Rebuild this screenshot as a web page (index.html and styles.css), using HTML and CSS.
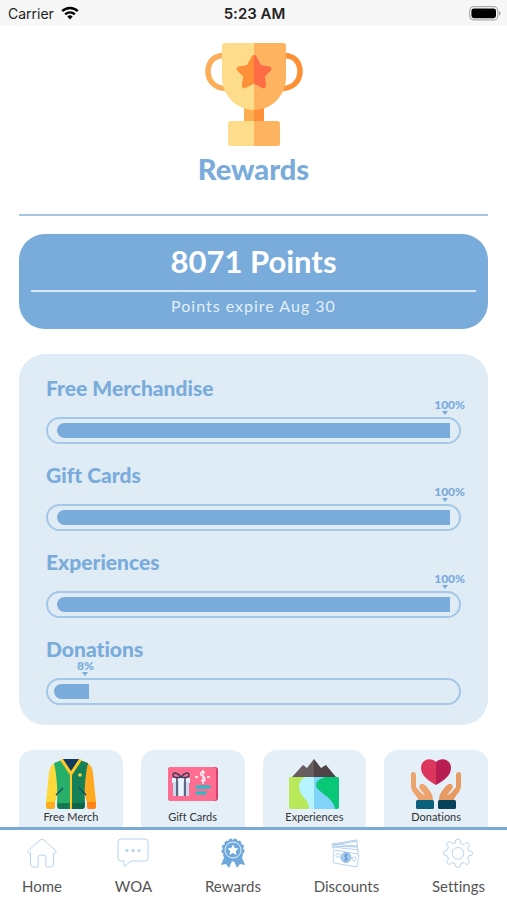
FILE: index.html
```html
<!DOCTYPE html>
<html lang="en">

<head>
    <meta charset="UTF-8">
    <meta name="viewport" content="width=device-width, initial-scale=1.0">
    <title>Rewards</title>
    <link rel="stylesheet" href="styles.css">
</head>

<body>

    <div class="status">
        <div class="carrier">
            <span>Carrier</span>
            <svg width="18" height="14" viewBox="0 0 18 14" fill="none" stroke="#000" stroke-width="2.4">
                <path d="M1.2 5.2a11.2 11.2 0 0 1 15.6 0" />
                <path d="M4.2 8.3a7 7 0 0 1 9.6 0" />
                <path d="M9 13.4 6.3 10.6a4 4 0 0 1 5.4 0z" fill="#000" stroke="none" />
            </svg>
        </div>
        <div class="time">5:23 AM</div>
        <div class="battery">
            <svg width="32" height="15" viewBox="0 0 32 15">
                <rect x="0.7" y="0.7" width="28" height="13.2" rx="4" fill="#fff" stroke="#aaa" stroke-width="1.2" />
                <rect x="2.4" y="2.4" width="24.6" height="9.8" rx="2.4" fill="#000" />
                <path d="M30 5.2c2 .6 2 3.6 0 4.2z" fill="#999" />
            </svg>
        </div>
    </div>

    <main>
        <header class="heading">
            <svg class="trophy" width="98" height="103" viewBox="0 0 98 103">
                <path d="M20 12.500C8 12 3 20 3 28.500S9 45 20 45.500" fill="none" stroke="#fdad58" stroke-width="5.500" />
                <path d="M78 12.500c12-.5 17 7.500 17 16s-6 16.500-17 17" fill="none" stroke="#fe9034" stroke-width="5.500" />
                <path d="M39 62h10v20H39z" fill="#fdac50" />
                <path d="M49 62h10v20H49z" fill="#fe903a" />
                <path d="M49 0H20q-3 0-3 3v31c0 18 14 33 32 33z" fill="#fddc8b" />
                <path d="M49 0h29q3 0 3 3v31c0 18-14 33-32 33z" fill="#fdb35f" />
                <path d="M49 78H26q-3 0-3 3v20q0 2 2 2h24z" fill="#fddc8b" />
                <path d="M49 78h23q3 0 3 3v20q0 2-2 2H49z" fill="#fdb35f" />
                <path d="M49 12c-1 0-2 .6-2.600 1.700L42 22l-8.500 1.400c-2 .5-2.600 2.600-1.300 4l6 6.200-1.300 9c-.2 2 1.700 3.400 3.500 2.500l8.600-4.300z" fill="#fe903a" />
                <path d="M49 12c1 0 2 .6 2.600 1.700L56 22l8.500 1.400c2 .5 2.600 2.600 1.300 4l-6 6.200 1.300 9c.2 2-1.700 3.400-3.500 2.500L49 40.800z" fill="#fd6c46" />
            </svg>
            <h1>Rewards</h1>
        </header>

        <section class="points">
            <h2>8071 Points</h2>
            <p>Points expire Aug 30</p>
        </section>

        <section class="goals">
            <div class="goal">
                <h3 id="goalMerch">Free Merchandise</h3>
                <div class="marker full"><span>100%</span></div>
                <div class="track" role="progressbar" aria-labelledby="goalMerch" aria-valuenow="100">
                    <div class="fill" style="width: 100%"></div>
                </div>
            </div>
            <div class="goal">
                <h3 id="goalCards">Gift Cards</h3>
                <div class="marker full"><span>100%</span></div>
                <div class="track" role="progressbar" aria-labelledby="goalCards" aria-valuenow="100">
                    <div class="fill" style="width: 100%"></div>
                </div>
            </div>
            <div class="goal">
                <h3 id="goalExp">Experiences</h3>
                <div class="marker full"><span>100%</span></div>
                <div class="track" role="progressbar" aria-labelledby="goalExp" aria-valuenow="100">
                    <div class="fill" style="width: 100%"></div>
                </div>
            </div>
            <div class="goal">
                <h3 id="goalDonate">Donations</h3>
                <div class="marker low"><span>8%</span></div>
                <div class="track low" role="progressbar" aria-labelledby="goalDonate" aria-valuenow="8">
                    <div class="fill" style="width: 8%"></div>
                </div>
            </div>
        </section>

        <section class="cards">
            <a class="card" href="#merch">
                <svg width="50" height="50" viewBox="0 0 50 50">
                    <path d="M17 0h16l1 5-9 11-9-11z" fill="#153b5c" />
                    <path d="M15 2C7 4 4 6 3 14L0 43h9l7-20z" fill="#ffd93b" />
                    <path d="M35 2c8 2 11 4 12 12l3 29h-9l-7-20z" fill="#ffaa20" />
                    <path d="M0 43h9v5q0 2-2 2H2q-2 0-2-2z" fill="#ffad1f" />
                    <path d="M41 43h9v5q0 2-2 2h-5q-2 0-2-2z" fill="#ff8415" />
                    <path d="M16 1 8 4c2 9 4 23 3 40h14V15z" fill="#27ae69" />
                    <path d="m34 1 8 3c-2 9-4 23-3 40H25V15z" fill="#168057" />
                    <path d="M11 44h14v6H14q-3 0-3-3z" fill="#168057" />
                    <path d="M25 44h14v3q0 3-3 3H25z" fill="#0d6749" />
                    <path d="m17 0 8 12 8-12 3 1-10 15v34h-2V16L14 1z" fill="#ffc928" />
                    <path d="m10 36 7-7M40 36l-7-7" stroke="#155062" stroke-width="1.500" />
                    <path d="M14 45v5m3-5v5m3-5v5m10-5v5m3-5v5m3-5v5" stroke="#0c5a43" stroke-width=".7" />
                    <circle cx="34" cy="16" r="1.700" fill="#ffd93b" />
                </svg>
                <span>Free Merch</span>
            </a>
            <a class="card" href="#giftcards">
                <svg width="50" height="50" viewBox="0 0 50 50">
                    <rect x="0" y="8" width="50" height="34" rx="3" fill="#d93f73" />
                    <rect x="0" y="8" width="48" height="34" rx="3" fill="#ff6e91" />
                    <path d="M4 19h18v5H4z" fill="#e9f3ff" />
                    <path d="M5 23h16v13q0 1-1 1H6q-1 0-1-1z" fill="#c7dcf1" />
                    <path d="M11 23h4v14h-4z" fill="#edf5ff" />
                    <path d="M9 19v18M17 19v18M13 18c-4-5-8-5-8-2s5 3 8 2c4-5 8-5 8-2s-5 3-8 2z" fill="none" stroke="#3c405a" stroke-width="1.500" />
                    <path d="M37 14c-2-3-6 0-4 2l3 2c3 3-1 6-3 3m2-10v14M27 18h3M39 18h3" fill="none" stroke="#fff" stroke-width="1.300" />
                    <path d="M29 28h12M29 34h8" stroke="#32b9c6" stroke-width="3.500" stroke-linecap="round" />
                </svg>
                <span>Gift Cards</span>
            </a>
            <a class="card" href="#experiences">
                <svg width="50" height="50" viewBox="0 0 50 50">
                    <path d="M3 18 14 6l4 3 7-9v18z" fill="#685d5e" />
                    <path d="m25 0 7 9 5-3 10 12H25z" fill="#504347" />
                    <path d="M1 18h24v32H2q-2 0-2-2V19z" fill="#b9e85b" />
                    <path d="M25 18h24l1 1v29q0 2-2 2H25z" fill="#08c777" />
                    <path d="M17 18h8v32h-5c0-11-9-11-10-22 0-5 3-9 7-10z" fill="#b8f4ff" />
                    <path d="M25 18h11c-5 2-9 4-9 8 0 7 18 12 19 24H25z" fill="#80d4f7" />
                </svg>
                <span>Experiences</span>
            </a>
            <a class="card" href="#donations">
                <svg width="50" height="50" viewBox="0 0 50 50">
                    <path d="M25 3c-5-5-15-3-15 6 0 8 8 13 15 17z" fill="#dc365f" />
                    <path d="M25 3c5-5 15-3 15 6 0 8-8 13-15 17z" fill="#b91e53" />
                    <path d="M0 15q0-2 2-2 3 0 3 3v12l6 7 3 1-5-6q-2-3 1-5 2-1 5 2c4 5 7 8 7 14H7C6 36 1 34 0 28z" fill="#eca36c" />
                    <path d="M50 15q0-2-2-2-3 0-3 3v12l-6 7-3 1 5-6q2-3-1-5-2-1-5 2c-4 5-7 8-7 14h15c1-5 6-7 7-13z" fill="#e79a62" />
                    <rect x="5" y="41" width="18" height="9" rx="1.500" fill="#0b607b" />
                    <rect x="27" y="41" width="18" height="9" rx="1.500" fill="#06435b" />
                </svg>
                <span>Donations</span>
            </a>
        </section>
    </main>

    <nav>
        <a href="#home">
            <svg width="30" height="30" viewBox="0 0 30 30">
                <path d="M1.500 12.500 13 2q2-1.500 4 0l11.500 10.500c1.500 2-.5 3.500-2 2.600V26q0 3-3 3H19v-9q0-3-3-3h-2q-3 0-3 3v9H6.500q-3 0-3-3V15c-2 1-3.500-1-2-2.500z" />
            </svg>
            <span>Home</span>
        </a>
        <a href="#woa">
            <svg width="32" height="30" viewBox="0 0 32 30">
                <path d="M4 1h24q3 0 3 3v16q0 3-3 3H14l-6 5q-1 1-1-1v-4H4q-3 0-3-3V4q0-3 3-3z" />
                <g class="solid">
                    <circle cx="10" cy="12.500" r="1.600" />
                    <circle cx="16" cy="12.500" r="1.600" />
                    <circle cx="22" cy="12.500" r="1.600" />
                </g>
            </svg>
            <span>WOA</span>
        </a>
        <a href="#rewards">
            <svg width="30" height="30" viewBox="0 0 30 30">
                <path class="ribbon" d="m7 17-4 10 5-1 3 4 4-9 4 9 3-4 5 1-4-10z" />
                <circle class="seal" cx="15" cy="12" r="10.500" />
                <circle class="ring" cx="15" cy="12" r="8" />
                <path class="star" d="m15 6.500 1.700 3.400 3.800.5-2.700 2.700.6 3.800-3.400-1.800-3.400 1.800.6-3.800-2.700-2.700 3.800-.5z" />
            </svg>
            <span>Rewards</span>
        </a>
        <a href="#discounts">
            <svg width="30" height="30" viewBox="0 0 30 30">
                <path d="m3 12 24 4q1 0 1 1l-2 12-23-4q-1 0-1-1z" />
                <path d="M2 11 1 6l24-4q1 0 1 1l1 13M1 6l26 2M2 9l26 3" />
                <path class="edge" d="m2 7 24-4M2 8l25 1" />
                <circle class="tint" cx="15" cy="19.500" r="5" />
                <circle cx="7" cy="17.500" r="2" />
                <circle cx="23" cy="21" r="2" />
                <path class="mark" d="M17 17c-3-2-5 1-2 2.500s1 4-2 2M15 16v7" />
            </svg>
            <span>Discounts</span>
        </a>
        <a href="#settings">
            <svg width="30" height="30" viewBox="0 0 30 30">
                <path d="M12.500 3q0-2 2.500-2t2.500 2v2l3.500 1.500L22.500 5q1.500-1 3 .5t.5 3L24.500 10 26 13h1.500q2 0 2 2.500t-2 2H26L24.500 21l1.500 1.500q1 1.500-.5 3t-3 .5L21 24.500 17.500 26v1.500q0 2-2.500 2t-2.500-2V26L9 24.500 7.500 26q-1.500 1-3-.5t-.5-3L5.500 21 4 17.500H2.500q-2 0-2-2.500t2-2.500H4L5.500 9 4 7.500q-1-1.500.5-3t3-.5L9 5.500 12.500 5z" />
                <circle cx="15" cy="15.300" r="5.800" />
            </svg>
            <span>Settings</span>
        </a>
    </nav>

</body>

</html>
```
FILE: styles.css
```css
* {
    margin: 0;
    padding: 0;
    box-sizing: border-box;
}

body {
    height: 100vh;
    display: flex;
    flex-direction: column;
    background-color: #fff;
    color: #79abdb;
    font-family: 'Lato', sans-serif;
    font-variant-ligatures: none;
    overflow: hidden;
}

svg {
    display: block;
}

a {
    text-decoration: none;
}

/* phone status bar */
.status {
    display: grid;
    grid-template-columns: 1fr auto 1fr;
    align-items: center;
    height: 26px;
    padding: 0 6px 0 8px;
    background: #f7f7f7;
    color: #222;
    font-family: 'Inter', sans-serif;
    font-size: 14px;
}

.carrier {
    display: flex;
    align-items: center;
    gap: 7px;
}

.time {
    font-size: 15px;
    font-weight: 600;
}

.battery {
    justify-self: end;
}

main {
    flex: 1;
    min-height: 0;
    padding: 17px 19px 0;
    overflow: hidden;
}

.heading {
    display: flex;
    flex-direction: column;
    align-items: center;
    padding-bottom: 27px;
    border-bottom: 2px solid #a3c7e4;
}

.heading h1 {
    margin-top: 5px;
    font-size: 29px;
    line-height: 36px;
    font-weight: 900;
}

.points {
    margin-top: 18px;
    padding: 8px 12px 12px;
    border-radius: 26px;
    background: #79abdb;
    color: #fff;
    text-align: center;
}

.points h2 {
    padding-bottom: 10px;
    border-bottom: 2px solid #d9e8f5;
    font-size: 31px;
    line-height: 38px;
    font-weight: 700;
}

.points p {
    padding-top: 3px;
    font-size: 16px;
    line-height: 22px;
    letter-spacing: 1px;
    color: #e4effa;
}

.goals {
    display: flex;
    flex-direction: column;
    gap: 19px;
    margin-top: 25px;
    padding: 22px 27px 20px;
    border-radius: 26px;
    background: #dfebf5;
}

.goal h3 {
    font-size: 21px;
    line-height: 23px;
    font-weight: 900;
}

/* percentage above the bar */
.marker {
    display: flex;
    height: 18px;
    font-size: 12px;
    line-height: 12px;
    font-weight: 900;
}

.marker span::after {
    content: "";
    display: block;
    width: 0;
    margin: 0 auto;
    border: 3px solid transparent;
    border-top: 4px solid #79abdb;
    border-bottom: 0;
}

.marker.full {
    justify-content: flex-end;
    margin-right: -4px;
}

.marker.full span::after {
    margin-left: 8px;
}

.marker.low {
    padding-left: 31px;
}

.track {
    display: flex;
    align-items: center;
    height: 27px;
    padding: 0 9px;
    border: 2px solid #a3c7e7;
    border-radius: 14px;
}

.track.low {
    padding: 0 6px;
}

.fill {
    min-width: 35px;
    height: 15px;
    border-radius: 8px 0 0 8px;
    background: #79abdb;
}

.cards {
    display: grid;
    grid-template-columns: repeat(4, 1fr);
    gap: 18px;
    margin-top: 25px;
}

.card {
    display: flex;
    flex-direction: column;
    align-items: center;
    height: 96px;
    padding-top: 9px;
    border-radius: 14px;
    background: #e4eff7;
    color: #333;
    font-size: 11px;
    line-height: 16px;
}

nav {
    display: flex;
    justify-content: space-between;
    padding: 8px 22px 4px;
    border-top: 3px solid #7ba9d8;
    background: #fff;
}

nav a {
    display: flex;
    flex-direction: column;
    align-items: center;
    gap: 8px;
    color: #555;
    font-size: 15px;
    line-height: 20px;
}

nav svg {
    fill: none;
    stroke: #b9d3f1;
    stroke-width: 1;
}

nav .solid {
    fill: #b5d5ef;
    stroke: none;
}

nav .ribbon {
    fill: #6fa8dc;
    stroke: none;
}

nav .seal {
    fill: #6fa8dc;
    stroke: #6fa8dc;
    stroke-width: 2;
    stroke-dasharray: 3 2;
}

nav .ring {
    stroke: #e6f1fb;
    stroke-width: 1;
}

nav .star {
    fill: #fff;
    stroke: none;
}

nav .edge {
    stroke: #a5cbee;
}

nav .tint {
    fill: #a5cbee;
    stroke: #8cb8e4;
}

nav .mark {
    stroke: #5d96d0;
}
```
